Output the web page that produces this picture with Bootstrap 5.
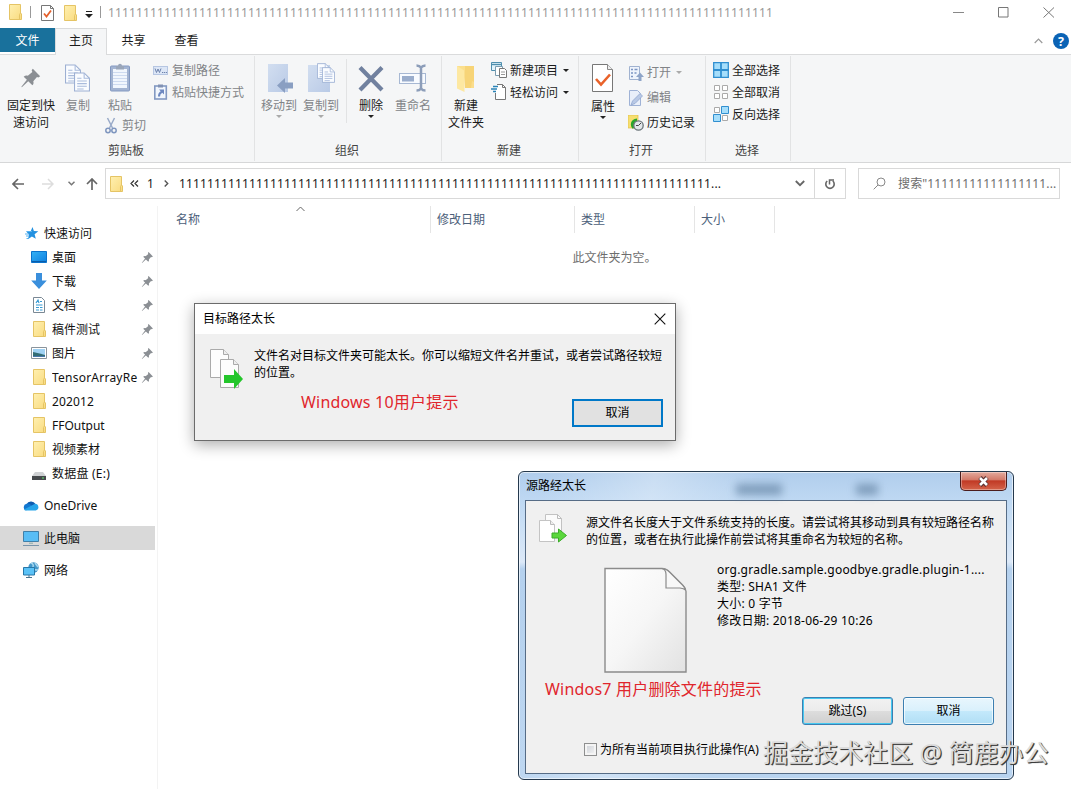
<!DOCTYPE html>
<html lang="zh-CN">
<head>
  <meta charset="UTF-8">
  <title>文件资源管理器</title>
  <link href="https://cdn.jsdelivr.net/npm/bootstrap@5.3.0/dist/css/bootstrap.min.css" rel="stylesheet">
  <style>
    body {
      width: 1071px;
      height: 789px;
      overflow: hidden;
      background: #fff;
      color: #1b1b1b;
      font: 12px/17px "Noto Sans", "Noto Sans CJK SC", sans-serif;
      white-space: nowrap;
    }
    svg { display: block; flex: none; }
    .ones { letter-spacing: .137px; }
    .wide { letter-spacing: .23px; }

    /* title bar and tabs */
    .title-bar { height: 28px; padding-left: 7px; color: #999; }
    .title-bar .ones { margin-left: 7px; line-height: 26px; }
    .vline { width: 1px; height: 12px; margin-top: 6px; background: #999; }
    .win-btns { margin: 7px 16px 0 0; gap: 34px; }
    .tab-row { height: 27px; border-bottom: 1px solid #dadbdc; }
    .tab-item { width: 53px; height: 27px; line-height: 25px; text-align: center; }
    .tab-file { width: 55px; height: 24px; background: #19719c; color: #fff; }
    .tab-home { width: 52px; background: #f5f6f7; border: 1px solid #dadbdc; border-bottom: 0; line-height: 24px; }

    /* ribbon */
    .ribbon { height: 108px; background: #f5f6f7; border-bottom: 1px solid #d6d7d8; }
    .rgroup { height: 105px; margin-top: 1px; border-right: 1px solid #e2e3e4; }
    .rgroup-body { height: 86px; }
    .rgroup-title { padding-right: 2px; text-align: center; color: #444; line-height: 18px; }
    .big-btn { width: 42px; padding-top: 7px; text-align: center; }
    .big-btn svg { margin: 0 auto 2px; }
    .big-btn .caret { margin: 1px auto 0; }
    .small-btn { height: 22px; gap: 3px; }
    .small-btn .caret { margin-left: 2px; }
    .small-list { padding-top: 3px; }
    .tall-list { padding-top: 4px; }
    .tall-list .small-btn { height: 25px; }
    .off { color: #818487; }
    .caret { width: 0; border: 3px solid transparent; border-top-color: #222; border-bottom: 0; }
    .off .caret { border-top-color: #aaa; }

    /* address bar */
    .addr-row { height: 43px; padding-top: 5px; }
    .addr-box { width: 741px; height: 31px; border: 1px solid #d9d9d9; }
    .addr-box span { padding-bottom: 1px; }
    .addr-reload { width: 31px; border-left: 1px solid #d9d9d9; }
    .search-box { width: 202px; height: 31px; margin-left: 12px; border: 1px solid #d9d9d9; color: #6d6d6d; }

    /* navigation pane and list */
    .nav-pane { width: 158px; height: 583px; padding-top: 15px; border-right: 1px solid #f3f3f3; }
    .tree-row { height: 24px; width: 155px; color: #111; }
    .tree-top { padding-left: 23px; gap: 5px; }
    .tree-gap { margin-top: 8px; }
    .tree-sub { padding-left: 31px; gap: 5px; }
    .tree-sub .tree-text { width: 87px; overflow: hidden; }
    .tree-sub .tree-text + svg { margin-left: -3px; }
    .tree-picked { background: #d9d9d9; }
    .list-head { height: 27px; color: #4c607a; position: relative; }
    .list-head > div { border-right: 1px solid #e5e5e5; padding-left: 6px; line-height: 27px; }
    .sort-mark { position: absolute; left: 138px; top: 0; }
    .empty-note { margin-top: 16px; text-align: center; color: #6d6d6d; }

    /* dialogs float over the explorer window */
    .dlg { position: absolute; color: #000; }
    .dlg-ten { left: 194px; top: 303px; width: 482px; height: 138px; background: #f0f0f0; border: 1px solid #6b6b6b; box-shadow: 0 4px 14px rgba(0,0,0,.32); }
    .dlg-ten .dlg-title { height: 30px; background: #fff; padding: 0 9px 1px 8px; }
    .red-note { color: #e0262c; font-size: 16px; line-height: 22px; letter-spacing: .2px; }
    .btn-ten { width: 91px; height: 28px; border: 2px solid #0078c8; background: #e1e1e1; line-height: 23px; text-align: center; }
    .dlg-seven { left: 518px; top: 471px; width: 496px; height: 309px; padding: 0 6px 6px; border: 1px solid #25394d; border-radius: 6px; background: linear-gradient(100deg, rgba(255,255,255,.0) 5%, rgba(255,255,255,.3) 25%, rgba(255,255,255,0) 45%), linear-gradient(#b0cdec 0, #bfd9f3 30px, #dce9f8 90px, #b5d1ee 97px, #b9d4f0 100%); box-shadow: inset 0 0 0 1px rgba(255,255,255,.6); }
    .dlg-seven .dlg-title { height: 28px; }
    .dlg-seven .dlg-title span { width: 211px; padding: 5px 0 0 1px; }
    .smudge { height: 11px; margin-top: 12px; background: #5f7f9f; opacity: .65; filter: blur(4px); }
    .close-seven { width: 47px; height: 19px; border: 1px solid #4b1c1c; border-top: 0; border-radius: 0 0 5px 5px; background: linear-gradient(#e3aa9d 0, #d47b6a 42%, #c13a25 50%, #d4634a 100%); box-shadow: inset 0 0 0 1px rgba(255,255,255,.35); }
    .seven-body { height: 274px; background: #f0f0f0; border: 1px solid #566c86; }
    .btn-seven { width: 91px; height: 28px; border: 1px solid #3c7fb1; border-radius: 3px; text-align: center; line-height: 25px; background: linear-gradient(#e8f6fd 0, #d9f0fc 50%, #c4e9fb 50%, #b0def5 100%); box-shadow: inset 0 0 0 1px rgba(255,255,255,.7); }
    .btn-skip { background: linear-gradient(#f2f2f2 0, #ebebeb 50%, #dddddd 50%, #cfcfcf 100%); box-shadow: inset 0 0 0 1px #45c8f0; }
    .tick-box { width: 13px; height: 13px; border: 1px solid #8e8f8f; background: linear-gradient(135deg, #cbcfd5, #f6f6f6); box-shadow: inset 0 0 0 2px #f4f4f4; }
    .stamp { position: absolute; left: 763px; top: 735px; font-size: 25px; line-height: 34px; color: #dcdcdc; text-shadow: 1px 1px 0 #3c3c3c, 1px 1px 1px #555; }
  </style>
</head>
<body>
<svg width="0" height="0" class="position-absolute">
  <defs>
    <linearGradient id="gFold" x2="1" y2="1"><stop stop-color="#fff0b0"/><stop offset="1" stop-color="#f9db80"/></linearGradient>
    <linearGradient id="gBlue" x2="1" y2="1"><stop stop-color="#35b2f5"/><stop offset="1" stop-color="#0d7fe0"/></linearGradient>
    <linearGradient id="gSheet" x2="1" y2="1"><stop stop-color="#fff"/><stop offset=".5" stop-color="#f6f6f6"/><stop offset="1" stop-color="#e2e2e2"/></linearGradient>
    <linearGradient id="gPale" x2="1" y2="1"><stop stop-color="#d2def0"/><stop offset="1" stop-color="#b9cae6"/></linearGradient>
    <symbol id="folder" viewBox="0 0 16 16"><path d="M2.500.5h11v8.500l1 1v5.500h-12z" fill="url(#gFold)" stroke="#e5c465"/><path d="M12.500 15v-4.500l1-1.500" fill="none" stroke="#e5c465"/></symbol>
    <symbol id="pin" viewBox="0 0 24 24"><path d="M14 2l8 8-2 1.500-1.500-.5-4 4.500c.6 2 .2 3.500-1 4.500l-4.500-4.500L2 22l-.5-.5L7.500 14 4 10.500c1.500-1.200 3-1.400 4.500-.9l5-4.100-.8-2z" fill="#8b8f94"/></symbol>
    <symbol id="page" viewBox="0 0 15 18"><path d="M.5.5h9l5 5v12H.5z" fill="#fafcff" stroke="#9db0d3"/><path d="M9.500.5v5h5M3 5.500h4M3 8h9M3 10.500h9M3 13h9M3 15.500h6" fill="none" stroke="#a9bbdc"/></symbol>
    <symbol id="copyto" viewBox="0 0 33 40">
      <path d="M.5.5h13l5 5v23H.5z" fill="#fdfdfd" stroke="#aaa"/><path d="M13.500.5v5h5" fill="#eee" stroke="#aaa"/>
      <path d="M10.500 10.500h13l5 5v23h-18z" fill="#fcfcfc" stroke="#aaa"/><path d="M23.500 10.500v5h5" fill="#eee" stroke="#aaa"/>
      <path d="M14 26h10v-6l9 10-9 10v-6H14z" fill="#24c62b"/>
    </symbol>
  </defs>
</svg>

<div class="title-bar d-flex align-items-start">
  <svg class="mt-1" width="16" height="16"><use href="#folder"/></svg>
  <div class="vline" style="margin-left:7px"></div>
  <svg style="margin:5px 0 0 10px" width="13" height="16" viewBox="0 0 13 16"><path d="M.5.5h9l3 3v12H.5z" fill="#fff" stroke="#777"/><path d="M9.500.5v3h3" fill="none" stroke="#777"/><path d="M3 8.500l2.500 3L10 5.500" fill="none" stroke="#e4602c" stroke-width="1.800"/></svg>
  <svg style="margin:5px 0 0 8px" width="16" height="16"><use href="#folder"/></svg>
  <svg style="margin:11px 0 0 7px" width="8" height="7" viewBox="0 0 8 7"><path d="M1 .5h6" stroke="#222"/><path d="M0 3h8L4 7z" fill="#222"/></svg>
  <div class="vline" style="margin-left:7px"></div>
  <div class="ones">11111111111111111111111111111111111111111111111111111111111111111111111111111111111111111111111</div>
  <div class="win-btns d-flex ms-auto">
    <svg width="11" height="11"><path d="M0 5.500h11" stroke="#888"/></svg>
    <svg width="11" height="11"><path d="M.5.5h9.500v9.500H.5z" fill="none" stroke="#777"/></svg>
    <svg width="12" height="11"><path d="M.5.5l10.500 10M11 .5L.5 10.500" stroke="#777"/></svg>
  </div>
</div>

<div class="tab-row d-flex">
  <div class="tab-item tab-file">文件</div>
  <div class="tab-item tab-home">主页</div>
  <div class="tab-item">共享</div>
  <div class="tab-item">查看</div>
  <div class="d-flex align-items-center ms-auto" style="gap:10px;padding-right:2px">
    <svg width="9" height="6"><path d="M.7 5l3.800-3.800L8.300 5" fill="none" stroke="#999" stroke-width="1.200"/></svg>
    <svg width="16" height="16" viewBox="0 0 16 16"><circle cx="8" cy="8" r="8" fill="#0b63b5"/><text x="8" y="12.500" fill="#fff" font-size="12.500" font-weight="700" text-anchor="middle">?</text></svg>
  </div>
</div>

<div class="ribbon d-flex">
  <div class="rgroup" style="width:255px">
    <div class="rgroup-body d-flex">
      <div class="big-btn" style="width:62px"><svg width="24" height="32" viewBox="0 -4 24 32"><use href="#pin" width="22" height="22" x="1" y="0"/></svg>固定到快<br>速访问</div>
      <div class="big-btn off" style="width:32px"><svg width="26" height="32"><use href="#page" x="0" y="1" width="16" height="20"/><use href="#page" x="9" y="9" width="16" height="20"/></svg>复制</div>
      <div style="width:59px;padding-left:5px">
        <div class="big-btn off"><svg width="22" height="32" viewBox="0 0 22 32"><rect x="1.500" y="3" width="19" height="25" rx="1" fill="#a3b4d2" stroke="#8399c2"/><path d="M4 6h14v19H4z" fill="#f1f6fd"/><path d="M4 9.500h14M4 12.500h14M4 15.500h14M4 18.500h14M4 21.500h14" stroke="#cddaf0"/><path d="M7 3h2c0-3 4-3 4 0h2v3.500H7z" fill="#9aa6ba"/></svg>粘贴</div>
        <div class="small-btn off d-flex align-items-center" style="padding-left:6px;height:23px">
          <svg width="12" height="17" viewBox="0 0 12 17"><path d="M2.500 1l5 10M9.500 1l-5 10" stroke="#9aabc9" stroke-width="1.500"/><circle cx="3" cy="13.500" r="2.200" fill="none" stroke="#7f96bf" stroke-width="1.500"/><circle cx="9" cy="13.500" r="2.200" fill="none" stroke="#7f96bf" stroke-width="1.500"/></svg>
          <span style="padding-left:2px">剪切</span>
        </div>
      </div>
      <div class="small-list off">
        <div class="small-btn d-flex align-items-center"><svg width="16" height="16"><rect x=".5" y="4.500" width="14" height="8" fill="#dce6f6" stroke="#b6c6e2"/><path d="M2 6.500l1.500 4L5 7l1.500 3.500L8 6.500M9 10.500h1.300M11 10.500h1.300M13 10.500h1" stroke="#6d83ac" fill="none"/></svg>复制路径</div>
        <div class="small-btn d-flex align-items-center"><svg width="16" height="16"><rect x="1.800" y="2" width="11.500" height="13" fill="#f1f6fd" stroke="#8399c2" stroke-width="1.600"/><path d="M5 .5h5v3H5z" fill="#8091b3"/><path d="M6 5.500h5v5L9.300 8.800Q7 10 7 12.500H5Q4.800 9 7.700 7.200z" fill="#6d88c0"/></svg>粘贴快捷方式</div>
      </div>
    </div>
    <div class="rgroup-title">剪贴板</div>
  </div>

  <div class="rgroup" style="width:187px">
    <div class="rgroup-body d-flex" style="padding-left:3px">
      <div class="big-btn off"><svg width="28" height="32"><path d="M3 1h20v28H3z" fill="url(#gPale)"/><path d="M12 22.500l8-7.500v4.500h8v6h-8V30z" fill="#8a9fc2"/></svg>移动到<div class="caret"></div></div>
      <div class="big-btn off"><svg width="28" height="32"><path d="M1 2h22v27H1z" fill="url(#gPale)"/><use href="#page" x="10" y="0" width="13" height="16"/><use href="#page" x="15" y="4" width="13" height="16"/></svg>复制到<div class="caret"></div></div>
      <div style="width:1px;height:64px;margin:3px 3px 0 4px;background:#e2e3e4"></div>
      <div class="big-btn"><svg width="26" height="32"><path d="M2 4.500l22 22.500M24 4.500L2 27" stroke="#71819f" stroke-width="4.200"/></svg>删除<div class="caret"></div></div>
      <div class="big-btn off"><svg width="28" height="32"><rect x=".5" y="10.500" width="26" height="10" fill="#f8fbff" stroke="#a7b8d3"/><path d="M3 13h12v5.500H3z" fill="#9aadcc"/><path d="M17.500 2.500q3 0 4.500 2 1.500-2 4.500-2M17.500 27.500q3 0 4.500-2 1.500 2 4.500 2M22 4v22" fill="none" stroke="#8c9db9" stroke-width="2.500"/></svg>重命名</div>
    </div>
    <div class="rgroup-title">组织</div>
  </div>

  <div class="rgroup" style="width:137px">
    <div class="rgroup-body d-flex" style="padding-left:3px">
      <div class="big-btn"><svg width="22" height="32"><path d="M8 3h11v22h-9z" fill="#f7d477"/><path d="M2 3h2.500l5 4v22L2 25.500z" fill="#fde8a2"/><path d="M2 3h8v5z" fill="#fbdf8d"/><path d="M17 18l2 1v6h-3z" fill="#fbdd8b"/></svg>新建<br>文件夹</div>
      <div class="small-list ms-1">
        <div class="small-btn d-flex align-items-center"><svg width="16" height="16"><path d="M.5.500h10v8H.5z" fill="#e4f4fb" stroke="#4f8fae"/><path d="M1 2.500h9" stroke="#4f8fae" stroke-width="1.400"/><path d="M4.500 4.500h7v9h-7z" fill="#fff" stroke="#7a9cb0"/><path d="M8.500 6.500h5l2 2v7h-7z" fill="#fff" stroke="#777"/><path d="M10 10h4M10 12.500h4" stroke="#999"/></svg>新建项目<div class="caret"></div></div>
        <div class="small-btn d-flex align-items-center"><svg width="16" height="16"><path d="M4.500.5h7l3 3v12h-10z" fill="#fff"/><path d="M6 .5h5.500l3 3v12h-10V9M11.500.5v3h3" fill="none" stroke="#777"/><path d="M2 2.500h5M0 5h6M2 7.500h3" stroke="#2b84b8" stroke-width="1.300"/></svg>轻松访问<div class="caret"></div></div>
      </div>
    </div>
    <div class="rgroup-title">新建</div>
  </div>

  <div class="rgroup" style="width:127px">
    <div class="rgroup-body d-flex" style="padding-left:3px">
      <div class="big-btn"><svg width="22" height="33" viewBox="0 0 22 33"><path d="M.5 1.500h15l5 5v22H.5z" fill="#fff" stroke="#777"/><path d="M15.500 1.500v5h5" fill="#eee" stroke="#888"/><path d="M4 16l5 5.500 9-10" fill="none" stroke="#e9622a" stroke-width="2.600"/></svg>属性<div class="caret"></div></div>
      <div class="small-list tall-list ms-1">
        <div class="small-btn off d-flex align-items-center"><svg width="16" height="16"><path d="M1.500 1.500h10v13h-10z" fill="#eff4fc" stroke="#a0b2d0"/><path d="M3 4.500h2M6.500 4.500h3M3 8h2M6.500 8h2M3 11.500h2" stroke="#7c95c2" stroke-width="1.700"/><path d="M10.500 16v-4H8l4-4.500 4 4.500h-2.500v4z" fill="#8ea4c8"/></svg>打开<div class="caret"></div></div>
        <div class="small-btn off d-flex align-items-center"><svg width="16" height="16"><path d="M1.500.5h8l3 3v12h-11z" fill="#e9effa" stroke="#9fb2d6"/><path d="M3 15l1.500-4L12 3.500l2.500 2.500L7 13.500z" fill="#b9c9e6" stroke="#8aa0cb" stroke-width=".7"/></svg>编辑</div>
        <div class="small-btn d-flex align-items-center"><svg width="16" height="16"><path d="M0 0h10v13H0z" fill="#f6df70" stroke="#dfbd4c" stroke-width=".7"/><path d="M9 3.500C2 4 1.500 11 5 14l2-3c-1-3 1-4 2-4z" fill="#29a52b"/><circle cx="10.500" cy="10.500" r="4.700" fill="#e2e7ea" stroke="#6a7479" stroke-width="1.300"/><path d="M10.500 10.500l2.500-2.500M10.500 10.500H8" stroke="#444"/></svg>历史记录</div>
      </div>
    </div>
    <div class="rgroup-title">打开</div>
  </div>

  <div class="rgroup" style="width:85px">
    <div class="rgroup-body small-list" style="padding-left:7px">
      <div class="small-btn d-flex align-items-center"><svg width="16" height="16"><path d="M.7.7h14.600v14.600H.7z" fill="#a6defb" stroke="#318fd0" stroke-width="1.300"/><path d="M8 0v16M0 8h16" stroke="#318fd0" stroke-width="1.800"/></svg>全部选择</div>
      <div class="small-btn d-flex align-items-center"><svg width="16" height="16"><path d="M1.500 1.500h5v5h-5zM9.500 1.500h5v5h-5zM1.500 9.500h5v5h-5zM9.500 9.500h5v5h-5z" fill="#fff" stroke="#aaa"/></svg>全部取消</div>
      <div class="small-btn d-flex align-items-center"><svg width="16" height="16"><path d="M1.500 1.500h5v5h-5zM9.500 9.500h5v5h-5z" fill="#fff" stroke="#aaa"/><path d="M8.500.5h7v7h-7zM.5 8.500h7v7h-7z" fill="#a6defb" stroke="#318fd0"/></svg>反向选择</div>
    </div>
    <div class="rgroup-title">选择</div>
  </div>
</div>

<div class="addr-row d-flex">
  <div class="d-flex align-items-center" style="width:105px;height:31px;padding-left:12px">
    <svg width="12" height="12"><path d="M12 6H1M6 1L1 6l5 5" fill="none" stroke="#666" stroke-width="1.600"/></svg>
    <svg style="margin-left:18px" width="12" height="12"><path d="M0 6h11M6 1l5 5-5 5" fill="none" stroke="#ddd" stroke-width="1.500"/></svg>
    <svg style="margin-left:14px" width="7" height="5"><path d="M.5.700L3.500 3.700 6.500.7" fill="none" stroke="#777" stroke-width="1.500"/></svg>
    <svg style="margin-left:11px" width="12" height="12"><path d="M6 12V1M1 6l5-5 5 5" fill="none" stroke="#666" stroke-width="1.700"/></svg>
  </div>
  <div class="addr-box d-flex align-items-center">
    <svg style="margin-left:2px" width="16" height="16"><use href="#folder"/></svg>
    <svg style="margin-left:6px" width="9" height="7"><path d="M4 .5l-3 3 3 3M8 .5l-3 3 3 3" fill="none" stroke="#333" stroke-width="1.200"/></svg>
    <span style="margin-left:8px;width:7px">1</span>
    <svg style="margin-left:10px" width="5" height="7"><path d="M.7.500l3 3-3 3" fill="none" stroke="#555" stroke-width="1.400"/></svg>
    <span class="ones" style="margin-left:10px">1111111111111111111111111111111111111111111111111111111111111111111111111111...</span>
    <svg class="ms-auto" style="margin-right:9px" width="10" height="7"><path d="M.8 1l4.200 4.200L9.200 1" fill="none" stroke="#666" stroke-width="1.800"/></svg>
    <div class="addr-reload h-100 d-flex align-items-center justify-content-center"><svg width="12" height="13"><path d="M8.800 4A4.200 4.200 0 1 1 3.200 4" fill="none" stroke="#666" stroke-width="1.600"/><path d="M6 1v4.500h4.500" transform="rotate(90 7 4)" fill="none" stroke="#666" stroke-width="1.500"/></svg></div>
  </div>
  <div class="search-box d-flex align-items-center">
    <svg style="margin-left:14px" width="13" height="13"><circle cx="8" cy="5" r="4" fill="none" stroke="#888"/><path d="M5 8L.7 12.300" stroke="#888"/></svg>
    <span class="ones" style="margin-left:12px">搜索"11111111111111111...</span>
  </div>
</div>

<div class="d-flex">
  <div class="nav-pane">
    <div class="tree-row tree-top d-flex align-items-center"><svg width="16" height="16"><path d="M9.500 2l1.400 4 4.400.3-3.700 2.900 1.200 4.600-3.900-2.300-4 2.800 1.200-4.600L3 6.300l4.800-.2z" fill="#2391e0"/><path d="M4 6.500h5M2 9h4M3 11h3M3.500 13.500h2" stroke="#56b2f0"/></svg>快速访问</div>
    <div class="tree-row tree-sub d-flex align-items-center"><svg width="16" height="16"><path d="M.5 2.500h15v11H.5z" fill="url(#gBlue)" stroke="#0b73cc"/><path d="M1 12.500h14" stroke="#0a5ca9"/></svg><div class="tree-text">桌面</div><svg width="13" height="13"><use href="#pin"/></svg></div>
    <div class="tree-row tree-sub d-flex align-items-center"><svg width="16" height="16"><path d="M5 0h6v7.500h4.800L8 16 .2 7.500H5z" fill="#3a8fdc"/></svg><div class="tree-text">下载</div><svg width="13" height="13"><use href="#pin"/></svg></div>
    <div class="tree-row tree-sub d-flex align-items-center"><svg width="16" height="16"><path d="M2.500.5h8l3 3v12h-11z" fill="#fff" stroke="#7a8894"/><path d="M5 6l2-3 1 3M9 4.500h2M5 8h6.500M5 10.500h3M9 10.500h2.500M5 13h3M9 13h2.500" fill="none" stroke="#389bd4" stroke-width="1.200"/></svg><div class="tree-text">文档</div><svg width="13" height="13"><use href="#pin"/></svg></div>
    <div class="tree-row tree-sub d-flex align-items-center"><svg width="16" height="16"><use href="#folder"/></svg><div class="tree-text">稿件测试</div><svg width="13" height="13"><use href="#pin"/></svg></div>
    <div class="tree-row tree-sub d-flex align-items-center"><svg width="16" height="16"><path d="M.5 2.500h15v11H.5z" fill="#fff" stroke="#8a949c"/><path d="M2 4h12v8H2z" fill="#9fd1f3"/><path d="M2 7q5 1 12 3v2H2z" fill="#326c75"/><path d="M2 11h12v1H2z" fill="#4777ad"/></svg><div class="tree-text">图片</div><svg width="13" height="13"><use href="#pin"/></svg></div>
    <div class="tree-row tree-sub d-flex align-items-center"><svg width="16" height="16"><use href="#folder"/></svg><div class="tree-text wide">TensorArrayRe</div><svg width="13" height="13"><use href="#pin"/></svg></div>
    <div class="tree-row tree-sub d-flex align-items-center"><svg width="16" height="16"><use href="#folder"/></svg><div class="tree-text ones">202012</div></div>
    <div class="tree-row tree-sub d-flex align-items-center"><svg width="16" height="16"><use href="#folder"/></svg><div class="tree-text">FFOutput</div></div>
    <div class="tree-row tree-sub d-flex align-items-center"><svg width="16" height="16"><use href="#folder"/></svg><div class="tree-text">视频素材</div></div>
    <div class="tree-row tree-sub d-flex align-items-center"><svg width="16" height="16"><path d="M4 7h8l3 4H1z" fill="#cfd1d3"/><path d="M1 11h14v4H1z" fill="#46494c"/><path d="M11 13h2" stroke="#5fe36a" stroke-width="1.200"/></svg><div class="tree-text wide">数据盘 (E:)</div></div>
    <div class="tree-row tree-gap tree-top d-flex align-items-center"><svg width="16" height="16"><path d="M3.500 7.500a5 5 0 0 1 9-.5l-3 5z" fill="#0f5cb0"/><path d="M3.500 6.800q3-.8 5 1.700L3 13.500A3.500 3.500 0 0 1 3.500 6.800" fill="#1277d0"/><path d="M12 6.800a3.400 3.400 0 0 1 .8 6.700H3q-1.500-.2-2-1z" fill="#27a5ea"/></svg>OneDrive</div>
    <div class="tree-row tree-top tree-picked d-flex align-items-center" style="margin-top:9px"><svg width="16" height="16"><path d="M.5 1.500h15v10H.5z" fill="#58bdf5" stroke="#407fa8"/><path d="M6 13.200h4" stroke="#8aa"/><path d="M0 15.500h16" stroke="#7894aa"/></svg>此电脑</div>
    <div class="tree-row tree-gap tree-top d-flex align-items-center"><svg width="16" height="16"><circle cx="10.500" cy="5.500" r="5.200" fill="#4497c9"/><path d="M8 1q3 1 2 4t5 3M12 1l3 4" fill="none" stroke="#a9d7ee" stroke-width="1.500"/><path d="M.5 5.500h11v7.500H.5z" fill="#5ac2f7" stroke="#2777a8"/><path d="M3 15.500h6M6 13v2" stroke="#48738e"/></svg>网络</div>
  </div>
  <div class="flex-grow-1">
    <div class="list-head d-flex">
      <div style="width:273px;padding-left:18px">名称</div>
      <div style="width:144px">修改日期</div>
      <div style="width:120px">类型</div>
      <div style="width:80px">大小</div>
      <svg class="sort-mark" width="9" height="6"><path d="M.5 5l4-4 4 4" fill="none" stroke="#666"/></svg>
    </div>
    <div class="empty-note">此文件夹为空。</div>
  </div>
</div>

<!-- Windows 10 dialog -->
<div class="dlg dlg-ten">
  <div class="dlg-title d-flex align-items-center justify-content-between">目标路径太长
    <svg width="12" height="12"><path d="M.7.700l10.600 10.600M11.300.7L.7 11.300" stroke="#111" stroke-width="1.100"/></svg>
  </div>
  <div class="d-flex" style="padding:13px 0 0 15px">
    <svg style="margin-top:2px" width="33" height="40"><use href="#copyto"/></svg>
    <div style="margin-left:11px">文件名对目标文件夹可能太长。你可以缩短文件名并重试，或者尝试路径较短<br>的位置。</div>
  </div>
  <div class="d-flex justify-content-between" style="padding:2px 12px 0 106px">
    <div class="red-note">Windows 10用户提示</div>
    <div class="btn-ten" style="margin-top:8px">取消</div>
  </div>
</div>

<!-- Windows 7 dialog -->
<div class="dlg dlg-seven">
  <div class="dlg-title d-flex align-items-start">
    <span>源路经太长</span>
    <div class="smudge" style="width:46px"></div>
    <div class="smudge" style="width:22px;margin-left:74px"></div>
    <div class="close-seven d-flex align-items-center justify-content-center ms-auto"><svg width="13" height="11"><path d="M3 1.500l7 8M10 1.500l-7 8" stroke="#583030" stroke-width="4.500"/><path d="M3 2l7 7M10 2l-7 7" stroke="#fff" stroke-width="2.600"/></svg></div>
  </div>
  <div class="seven-body">
    <div class="d-flex" style="padding:13px 0 0 13px">
      <svg width="28" height="29" viewBox="0 0 28 29"><path d="M6.500.5h12l4 4v17h-16z" fill="#fbfbfb" stroke="#c2c2c2"/><path d="M18.500.5v4h4" fill="none" stroke="#bbb"/><path d="M.5 6.500h11l4 4v17H.5z" fill="#fff" stroke="#c4c4c4"/><path d="M11.500 6.500v4h4" fill="#eee" stroke="#bbb"/><path d="M13 19h6.500v-4l8 6.500-8 6.500v-4H13z" fill="#5bd73c" stroke="#3aac29"/></svg>
      <div style="margin-left:19px">源文件名长度大于文件系统支持的长度。请尝试将其移动到具有较短路径名称<br>的位置，或者在执行此操作前尝试将其重命名为较短的名称。</div>
    </div>
    <div class="d-flex" style="padding:13px 0 0 78px;height:129px">
      <svg style="margin-top:6px" width="84" height="108" viewBox="0 0 84 108"><path d="M1 1.500h57q4 0 8 4l13 13q3 3 3 6v80.500H1z" fill="url(#gSheet)" stroke="#8b8b8b" stroke-width="1.400"/><path d="M58 1.500q4 1 4 6V21h14q4 .5 5.500 2-1-3-3-5L66 5.500q-4-4-8-4" fill="#f8f8f8" stroke="#8b8b8b" stroke-width="1.200"/></svg>
      <div class="wide" style="margin-left:29px">org.gradle.sample.goodbye.gradle.plugin-1....<br>类型: SHA1 文件<br>大小: 0 字节<br>修改日期: 2018-06-29 10:26</div>
    </div>
    <div class="red-note" style="margin:1px 0 0 19px">Windos7 用户删除文件的提示</div>
    <div class="d-flex justify-content-end" style="gap:10px;padding-right:12px;margin-top:-3px">
      <div class="btn-seven btn-skip">跳过(S)</div>
      <div class="btn-seven">取消</div>
    </div>
    <div class="d-flex align-items-center" style="gap:3px;padding:16px 0 0 58px"><div class="tick-box"></div>为所有当前项目执行此操作(A)</div>
  </div>
</div>
<div class="stamp">掘金技术社区 @ 简鹿办公</div>

<script src="https://cdn.jsdelivr.net/npm/bootstrap@5.3.0/dist/js/bootstrap.bundle.min.js"></script>
</body>
</html>
